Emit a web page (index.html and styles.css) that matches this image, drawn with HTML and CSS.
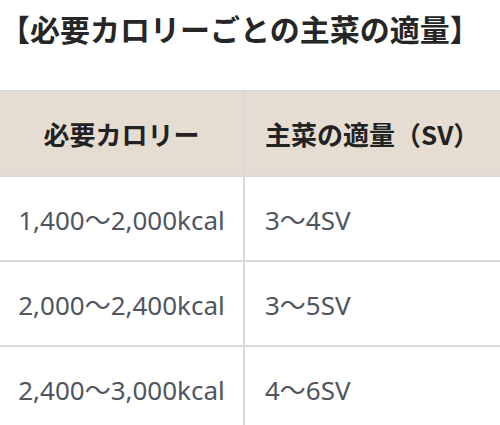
FILE: index.html
```html
<!DOCTYPE html>
<html lang="ja">
<head>
<meta charset="utf-8">
<link rel="stylesheet" href="styles.css">
</head>
<body>
<h2 class="title">【必要カロリーごとの主菜の適量】</h2>
<table class="tbl">
  <thead>
    <tr><th class="c1">必要カロリー</th><th class="c2">主菜の適量（SV）</th></tr>
  </thead>
  <tbody>
    <tr><td class="c1">1,400〜2,000kcal</td><td class="c2">3〜4SV</td></tr>
    <tr><td class="c1">2,000〜2,400kcal</td><td class="c2">3〜5SV</td></tr>
    <tr><td class="c1">2,400〜3,000kcal</td><td class="c2">4〜6SV</td></tr>
  </tbody>
</table>
</body>
</html>
```
FILE: styles.css
```css
html, body {
  margin: 0;
  padding: 0;
  background: #fff;
}
body {
  font-family: "Noto Sans CJK JP", "Noto Sans", sans-serif;
  color: #333;
  width: 500px;
  overflow: hidden;
}
.title {
  margin: 0;
  padding: 10px 0 0 0;
  font-size: 30px;
  line-height: 36px;
  font-weight: bold;
  color: #262626;
  height: 90px;
  box-sizing: border-box;
  white-space: nowrap;
}
.tbl {
  border-collapse: collapse;
  width: 500px;
  table-layout: fixed;
}
.tbl th, .tbl td {
  border: 2px solid #d9d9d9;
  height: 85px;
  padding: 0 0 0 20px;
  box-sizing: border-box;
  vertical-align: middle;
  white-space: nowrap;
}
.tbl th {
  background: #e5ddd1;
  font-size: 26px;
  font-weight: bold;
  color: #222;
}
.tbl td {
  font-size: 26px;
  color: #505560;
  font-family: "Noto Sans", "Noto Sans CJK JP", sans-serif;
}
.tbl .c1 {
  width: 244px;
  text-align: center;
  padding: 0;
  border-left: none;
}
.tbl .c2 {
  text-align: left;
  border-right: none;
}
```
